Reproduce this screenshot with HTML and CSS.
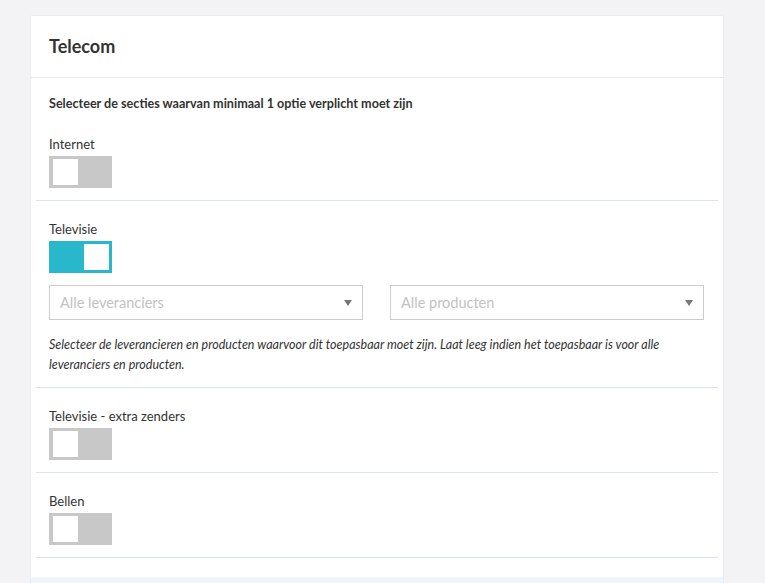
FILE: index.html
```html
<!DOCTYPE html>
<html lang="nl">
<head>
  <meta charset="UTF-8">
  <meta name="viewport" content="width=device-width, initial-scale=1.0">
  <title>Telecom</title>
  <link rel="stylesheet" href="styles.css">
</head>
<body>
  <div class="card">
    <header class="card-header">
      <h2>Telecom</h2>
    </header>

    <div class="card-body">
      <section class="option first">
        <p class="intro">Selecteer de secties waarvan minimaal 1 optie verplicht moet zijn</p>
        <div class="label">Internet</div>
        <div class="toggle"><span class="knob"></span></div>
      </section>

      <section class="option">
        <div class="label">Televisie</div>
        <div class="toggle on"><span class="knob"></span></div>
        <div class="selects">
          <div class="select"><span>Alle leveranciers</span></div>
          <div class="select"><span>Alle producten</span></div>
        </div>
        <p class="help">Selecteer de leverancieren en producten waarvoor dit toepasbaar moet zijn. Laat leeg indien het toepasbaar is voor alle leveranciers en producten.</p>
      </section>

      <section class="option">
        <div class="label">Televisie - extra zenders</div>
        <div class="toggle"><span class="knob"></span></div>
      </section>

      <section class="option">
        <div class="label">Bellen</div>
        <div class="toggle"><span class="knob"></span></div>
      </section>
    </div>

    <div class="card-footer"></div>
  </div>
</body>
</html>
```

FILE: styles.css
```css
/* Telecom settings card */
body {
  font-family: Lato, "Open Sans", Arial, sans-serif;
  margin: 0;
  padding: 16px 42px 0 31px;
  background-color: #f3f3f5;
  color: #333;
}

.card {
  background-color: #fff;
  box-shadow: 0 0 1px rgba(0, 0, 0, 0.15);
}

.card-header {
  padding: 18px 18px 19px;
  border-bottom: 1px solid #e8e8e8;
}

.card-header h2 {
  margin: 0;
  font-size: 18px;
  line-height: 24px;
  font-weight: 700;
  color: #333;
}

.card-body {
  padding: 0 5px 19px;
}

.option {
  padding: 19px 14px 12px 13px;
  border-bottom: 1px solid #dae2ea;
}

.option.first {
  padding-top: 17px;
}

.intro {
  margin: 0 0 22px;
  font-size: 12.6px;
  line-height: 18px;
  font-weight: 700;
}

.label {
  font-size: 13px;
  line-height: 18px;
  margin-bottom: 3px;
}

.toggle {
  width: 63px;
  height: 32px;
  box-sizing: border-box;
  padding: 3px 3px 3px 4px;
  background-color: #c8c8c8;
  display: flex;
}

.toggle .knob {
  width: 25px;
  height: 26px;
  background-color: #fff;
}

.toggle.on {
  background-color: #29b7cc;
  justify-content: flex-end;
}

.selects {
  display: flex;
  gap: 27px;
  margin-top: 12px;
}

.select {
  position: relative;
  flex: 1;
  height: 35px;
  box-sizing: border-box;
  border: 1px solid #ccc;
  padding: 0 10px;
  display: flex;
  align-items: center;
  font-size: 14.5px;
  color: #c2c2c2;
}

.select::after {
  content: "";
  position: absolute;
  right: 10px;
  top: 14px;
  border-left: 4px solid transparent;
  border-right: 4px solid transparent;
  border-top: 6px solid #777;
}

.help {
  margin: 15px 0 0;
  font-size: 12.5px;
  line-height: 20px;
  font-style: italic;
}

.card-footer {
  height: 20px;
  background-color: #eef6fb;
}
```
